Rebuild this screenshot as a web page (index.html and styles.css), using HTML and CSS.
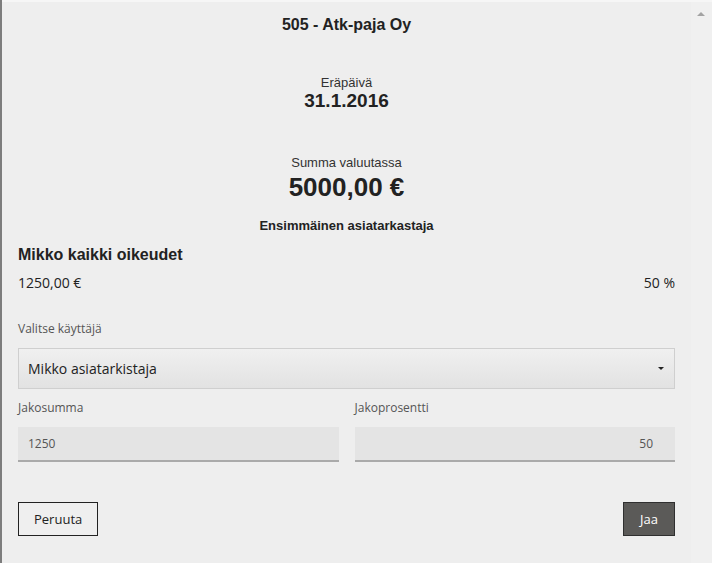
FILE: index.html
```html
<!DOCTYPE html>
<html lang="fi">
<head>
<meta charset="utf-8">
<link rel="stylesheet" href="styles.css">
</head>
<body>
<div class="screen">
  <div class="backdrop-edge"></div>
  <div class="modal">
    <h1 class="title">505 - Atk-paja Oy</h1>
    <div class="info info-date">
      <div class="info-label">Eräpäivä</div>
      <div class="info-value">31.1.2016</div>
    </div>
    <div class="info info-sum">
      <div class="info-label">Summa valuutassa</div>
      <div class="info-value big">5000,00 €</div>
    </div>
    <div class="section-title">Ensimmäinen asiatarkastaja</div>
    <div class="person">Mikko kaikki oikeudet</div>
    <div class="split-row">
      <span>1250,00 €</span>
      <span>50 %</span>
    </div>
    <label class="field-label">Valitse käyttäjä</label>
    <div class="select">
      <span>Mikko asiatarkistaja</span>
      <span class="caret"></span>
    </div>
    <div class="inputs">
      <div class="field">
        <label class="field-label">Jakosumma</label>
        <div class="input">1250</div>
      </div>
      <div class="field">
        <label class="field-label">Jakoprosentti</label>
        <div class="input right">50</div>
      </div>
    </div>
    <div class="actions">
      <button class="btn">Peruuta</button>
      <button class="btn primary">Jaa</button>
    </div>
  </div>
  <div class="scrollbar"><span class="arrow"></span></div>
</div>
</body>
</html>
```
FILE: styles.css
```css
* { box-sizing: border-box; }
html, body { margin: 0; padding: 0; }
body {
  width: 712px;
  height: 563px;
  overflow: hidden;
  background: #eeeeee;
  font-family: "Open Sans", "Liberation Sans", sans-serif;
  color: #222;
}
.screen {
  display: flex;
  height: 563px;
}
.backdrop-edge {
  width: 2px;
  background: #7d7d7d;
  flex: none;
}
.modal {
  flex: 1;
  background: #eeeeee;
  border-top: 2px solid #f6f6f6;
  padding: 0 16px 0 16px;
}
.title {
  margin: 14px 0 0;
  text-align: center;
  font-family: "Liberation Sans", Arial, sans-serif;
  font-weight: bold;
  font-size: 16px;
  line-height: 18px;
  color: #222;
}
.info {
  text-align: center;
  font-family: "Liberation Sans", Arial, sans-serif;
}
.info-date { margin-top: 41px; }
.info-sum { margin-top: 44px; }
.info-label {
  font-size: 13px;
  line-height: 15px;
  color: #333;
}
.info-value {
  font-weight: bold;
  font-size: 19px;
  line-height: 21px;
  color: #222;
}
.info-value.big {
  font-size: 26px;
  line-height: 32px;
  margin-top: 1px;
}
.section-title {
  margin-top: 15px;
  text-align: center;
  font-family: "Liberation Sans", Arial, sans-serif;
  font-weight: bold;
  font-size: 13px;
  line-height: 16px;
  color: #222;
}
.person {
  margin-top: 11px;
  font-family: "Liberation Sans", Arial, sans-serif;
  font-weight: bold;
  font-size: 16px;
  line-height: 20px;
  color: #222;
}
.split-row {
  margin-top: 9px;
  display: flex;
  justify-content: space-between;
  font-size: 14px;
  line-height: 18px;
  color: #222;
}
.field-label {
  display: block;
  font-size: 12px;
  line-height: 16px;
  color: #555;
}
.split-row + .field-label { margin-top: 29px; }
.select {
  margin-top: 11px;
  height: 41px;
  border: 1px solid #cfcfcf;
  background: linear-gradient(#f0f0f0, #e2e2e2);
  display: flex;
  align-items: center;
  justify-content: space-between;
  padding: 0 10px 0 9px;
  font-size: 14px;
  color: #222;
}
.caret {
  width: 0;
  height: 0;
  border-left: 3px solid transparent;
  border-right: 3px solid transparent;
  border-top: 3px solid #222;
}
.inputs {
  margin-top: 11px;
  display: grid;
  grid-template-columns: 1fr 1fr;
  gap: 16px;
}
.input {
  margin-top: 11px;
  height: 35px;
  background: #e4e4e4;
  border-bottom: 2px solid #aaaaaa;
  padding: 0 22px 0 10px;
  display: flex;
  align-items: center;
  font-size: 12px;
  color: #555;
}
.input.right { justify-content: flex-end; }
.actions {
  margin-top: 40px;
  display: flex;
  justify-content: space-between;
}
.btn {
  height: 34px;
  padding: 0 15px;
  border: 1px solid #222;
  background: #efefef;
  font-family: "Open Sans", "Liberation Sans", sans-serif;
  font-size: 13px;
  color: #222;
  border-radius: 0;
}
.btn.primary {
  background: #5b5a58;
  border-color: #2f2f2f;
  color: #fff;
  padding: 0 16px;
}
.scrollbar {
  width: 21px;
  flex: none;
  background: #f0f0f0;
  border-top: 2px solid #f6f6f6;
  position: relative;
}
.arrow {
  position: absolute;
  top: 10px;
  left: 6px;
  width: 0;
  height: 0;
  border-left: 4px solid transparent;
  border-right: 4px solid transparent;
  border-bottom: 4px solid #a3a3a3;
}
```
